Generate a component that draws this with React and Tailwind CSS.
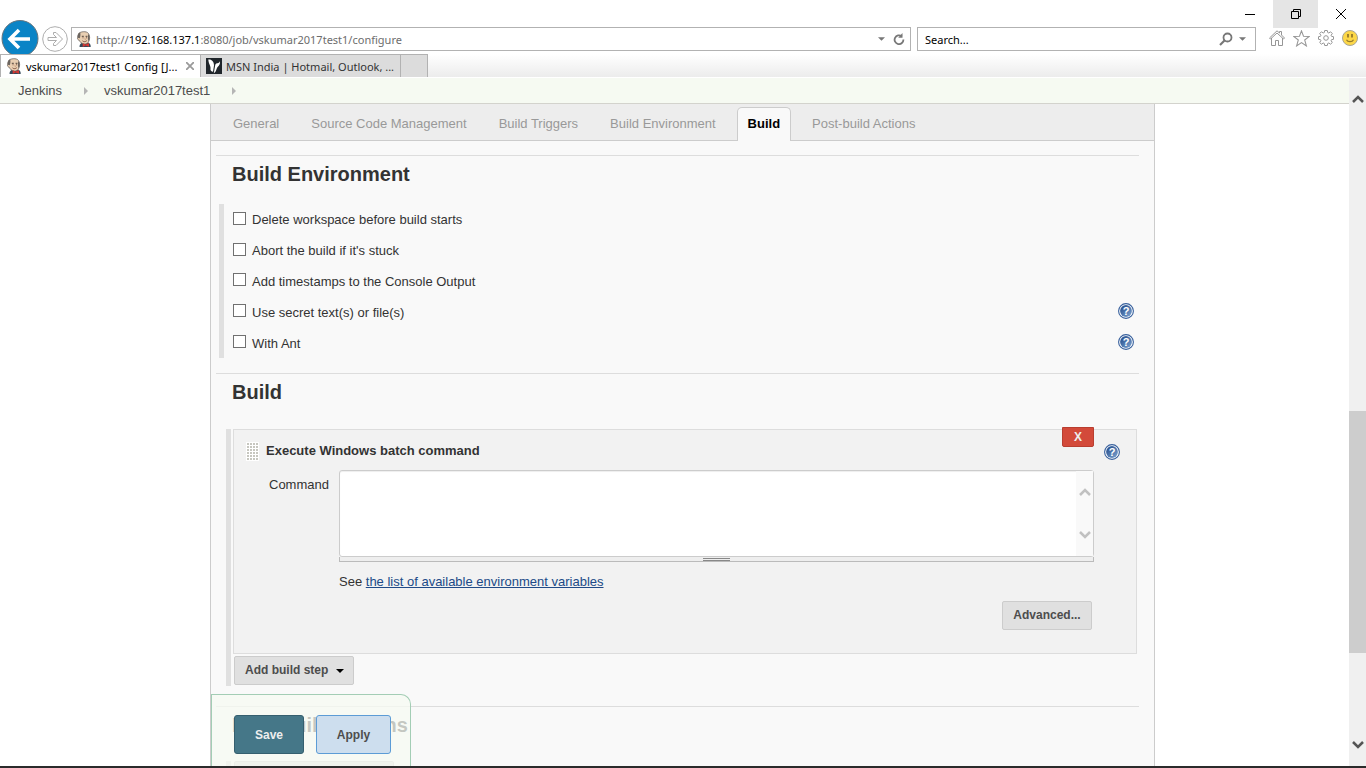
const TABS = [
  "General",
  "Source Code Management",
  "Build Triggers",
  "Build Environment",
  "Build",
  "Post-build Actions",
];

const ENV_OPTIONS = [
  { id: "delete-ws", label: "Delete workspace before build starts" },
  { id: "abort-stuck", label: "Abort the build if it's stuck" },
  { id: "timestamps", label: "Add timestamps to the Console Output" },
  { id: "secrets", label: "Use secret text(s) or file(s)", help: true },
  { id: "with-ant", label: "With Ant", help: true },
];

function JenkinsIcon() {
  return (
    <svg viewBox="0 0 16 16" className="h-4 w-4 shrink-0" aria-hidden="true">
      <path d="M3.500 16c0-2.500 1-4 3.500-4.500h4.500c2.500.5 3.200 2 3.200 4.500z" fill="#34495a" />
      <path d="M2.600 2.800C4 .4 10.500-.3 12.400 2.400c1.600 2.200 1.500 5.200.6 7.500-.7 2-2.300 3.200-4.300 3.200C6 13 4.200 11.400 3.300 9.300c-1.300-.3-2.100-1.400-1.700-2.500.2-1.500.3-3 1-4z" fill="#e9cfb2" stroke="#5c5550" strokeWidth=".7" />
      <path d="M1.800 6.800C1.400 4.500 2 2 4.200 1.300c.4 1.800.3 4-.4 6zM12.300 3c1.600 1.700 1.500 4.800.5 7-1-.5-1.200-4.500-.5-7z" fill="#6b645e" />
      <path d="M5.800 5.300h2M9.600 5.300h1.800" stroke="#40352f" strokeWidth=".9" />
      <path d="M6.500 6.800h1M10 6.800h1M6.500 9.800c1.200 1.200 3 1.100 4.300-.1" stroke="#7a4c39" strokeWidth=".9" fill="none" />
      <path d="M9 6.700v1.900h.9" stroke="#c69a76" strokeWidth=".7" fill="none" />
      <path d="M6.700 12.300l2.800 1.300 3.500-1.500v3.700L9.500 14.600 6.700 16z" fill="#d33833" />
    </svg>
  );
}

function MsnIcon() {
  return (
    <svg viewBox="0 0 16 16" className="h-4 w-4 shrink-0" aria-hidden="true">
      <path d="M0 0h16v16H0z" fill="#20262b" />
      <path d="M2.300 1.500C5.500.9 8 3.500 8 7.500L7 13.800c-1.500-.2-3-1.500-2.500-3.600C4.900 8.200 2.600 6 2.300 1.500z" fill="#fff" />
      <path d="M13.900 3.200c.5 3-1 4.400-2.300 5.800-1.500 1.700-.8 4.500-3.800 6.200l1.300-7.500c.2-1.700 1-2.700 2.300-2.500 1 .1 1.900-.8 2.500-2z" fill="#fff" />
    </svg>
  );
}

function HelpButton() {
  return (
    <button type="button" aria-label="Help" className="block h-4 w-4 shrink-0">
      <svg viewBox="0 0 16 16" className="h-4 w-4">
        <defs>
          <linearGradient id="help-fill" x1="0" x2="1" y1="0" y2="1">
            <stop offset="0" stopColor="#1d4585" />
            <stop offset="1" stopColor="#7fa6d3" />
          </linearGradient>
        </defs>
        <circle cx="8" cy="8" r="7.400" fill="#fff" stroke="#365f9c" strokeWidth="1.100" />
        <circle cx="8" cy="8" r="5.900" fill="url(#help-fill)" />
        <text x="8" y="12" textAnchor="middle" fontSize="11" fontWeight="700" fill="#fff" fontFamily="Liberation Sans, sans-serif">?</text>
      </svg>
    </button>
  );
}

function Caret({ className }) {
  return (
    <svg viewBox="0 0 8 4" className={className} aria-hidden="true">
      <path d="M0 0h8L4 4z" fill="currentColor" />
    </svg>
  );
}

function Chevron({ down, className }) {
  return (
    <svg viewBox="0 0 12 10" className={className} fill="none" stroke="currentColor" strokeWidth="2.500" aria-hidden="true">
      <path d={down ? "M1 2l5 5 5-5" : "M1 8l5-5 5 5"} />
    </svg>
  );
}

function WindowControls() {
  return (
    <div className="flex h-[27px] justify-end">
      <button type="button" aria-label="Minimize" className="flex h-7 w-[46px] items-center justify-center">
        <svg viewBox="0 0 10 10" className="h-[10px] w-[10px]" stroke="#000">
          <path d="M0 5.500h10" />
        </svg>
      </button>
      <button type="button" aria-label="Restore" className="flex h-7 w-[45px] items-center justify-center bg-[#e5e5e5]">
        <svg viewBox="0 0 10 10" className="h-[10px] w-[10px]" fill="none" stroke="#000">
          <path d="M.5 2.500h7v7h-7zM2.500 2.500v-2h7v7h-2" />
        </svg>
      </button>
      <button type="button" aria-label="Close" className="mr-[2px] flex h-7 w-[46px] items-center justify-center">
        <svg viewBox="0 0 10 10" className="h-[10px] w-[10px]" stroke="#000">
          <path d="M0 0l10 10M10 0L0 10" />
        </svg>
      </button>
    </div>
  );
}

function AddressBar() {
  return (
    <div className="flex h-[27px] items-start pr-2">
      <button type="button" aria-label="Back" className="-mt-[7px] ml-[1px] h-[34px] w-[38px] shrink-0 overflow-hidden">
        <svg viewBox="0 0 38 34" className="h-[34px] w-[38px]">
          <circle cx="19" cy="18.500" r="18" fill="#0a84c6" stroke="#68757d" />
          <path d="M10 19h19M18 10l-9 9 9 9" fill="none" stroke="#fff" strokeWidth="3.600" />
        </svg>
      </button>
      <button type="button" aria-label="Forward" className="-mt-[1px] ml-[3px] h-[26px] w-[26px] shrink-0">
        <svg viewBox="0 0 26 26" className="h-[26px] w-[26px]" fill="none" stroke="#adadad">
          <circle cx="13" cy="13" r="12.300" />
          <path d="M6 11.500h8.500L11.500 8.500V6.500h2.500l6.500 6.500-6.500 6.500h-2.500v-2l3-3H6z" />
        </svg>
      </button>
      <div className="ml-[3px] flex h-6 flex-1 items-center border border-[#b2b2b2] bg-white pl-1">
        <JenkinsIcon />
        <p className="ml-1 flex-1 pt-px leading-4 text-[#6d6d6d]">
          http://<span className="text-black">192.168.137.1</span>:8080/job/vskumar2017test1/configure
        </p>
        <Caret className="h-1 w-[7px] text-[#777]" />
        <button type="button" aria-label="Refresh" className="ml-2 mr-[5px]">
          <svg viewBox="0 0 12 12" className="h-3 w-3" fill="none" stroke="#777" strokeWidth="1.800">
            <path d="M8.800 3.300A4.400 4.400 0 1 0 10.400 6.500" />
            <path d="M9.500 0v4.800H5.200z" fill="#777" stroke="none" />
          </svg>
        </button>
      </div>
      <div className="ml-[6px] flex h-6 w-[339px] items-center border border-[#b2b2b2] bg-white px-[7px]">
        <input
          type="text"
          aria-label="Search"
          placeholder="Search..."
          className="min-w-0 flex-1 pt-px leading-4 outline-none placeholder:text-black"
        />
        <button type="button" aria-label="Run search" className="mr-[6px]">
          <svg viewBox="0 0 14 14" className="h-[14px] w-[14px]" fill="none" stroke="#777">
            <circle cx="8.500" cy="5.500" r="4" strokeWidth="1.800" />
            <path d="M5.500 8.500L1 13" strokeWidth="2.200" />
          </svg>
        </button>
        <Caret className="mr-[2px] h-1 w-[7px] text-[#777]" />
      </div>
      <div className="ml-[13px] mt-[3px] flex gap-2">
        <button type="button" aria-label="Home" className="h-4 w-4">
          <svg viewBox="0 0 16 16" className="h-4 w-4" fill="#fff" stroke="#969696">
            <path d="M2.500 8v7.500h4v-5h3v5h4V8M.5 8L8 .8 10.500 3V1.500h2V5l3 3-1 1L8 3 1.500 9z" />
          </svg>
        </button>
        <button type="button" aria-label="Favorites" className="h-[17px] w-[17px]">
          <svg viewBox="0 0 16 16" className="h-[17px] w-[17px]" fill="#fff" stroke="#969696">
            <path d="M8 .8l1.900 5.100 5.400.2-4.300 3.300 1.600 5.600L8 11.900 3.400 15 5 9.400.7 6.100l5.400-.2z" />
          </svg>
        </button>
        <button type="button" aria-label="Tools" className="h-4 w-4">
          <svg viewBox="0 0 16 16" className="h-4 w-4" fill="#fff" stroke="#969696">
            <path d="M6.700.5h2.600l.4 2 1.100.5 1.800-1.200 1.700 1.700L13.100 5.300l.4 1 2 .4v2.600l-2 .4-.4 1 1.200 1.800-1.700 1.700-1.800-1.200-1.100.5-.4 2H6.700l-.4-2-1.100-.5-1.800 1.200-1.700-1.700 1.200-1.800-.4-1-2-.4V6.700l2-.4.4-1-1.200-1.800 1.700-1.700L5.200 3l1.100-.5z" />
            <circle cx="8" cy="8" r="2.300" />
          </svg>
        </button>
        <button type="button" aria-label="Feedback" className="h-4 w-4">
          <svg viewBox="0 0 16 16" className="h-4 w-4">
            <circle cx="8" cy="8" r="7.500" fill="#fcd748" stroke="#a8a596" />
            <path d="M6 4v3.500M10 4v3.500" stroke="#94792b" strokeWidth="1.800" />
            <path d="M4.500 9.800c1.200 2.500 5.800 2.500 7 0" fill="none" stroke="#94792b" strokeWidth="1.200" />
          </svg>
        </button>
      </div>
    </div>
  );
}

function BrowserTabs() {
  return (
    <div className="flex h-6 border-b border-white bg-gradient-to-b from-white to-[#ececec] leading-4">
      <div className="flex w-[201px] items-center border-l border-r border-t border-[#b2b2b2] bg-white pl-[5px] text-black">
        <JenkinsIcon />
        <span className="ml-1 flex-1 whitespace-nowrap pt-px">vskumar2017test1 Config [J...</span>
        <button type="button" aria-label="Close tab" className="mr-[6px]">
          <svg viewBox="0 0 8 8" className="h-2 w-2" stroke="#9a9a9a" strokeWidth="1.800">
            <path d="M0 0l8 8M8 0L0 8" />
          </svg>
        </button>
      </div>
      <div className="flex w-[200px] items-center border-r border-t border-[#b2b2b2] bg-[#dcdcdc] pl-[5px] text-[#333]">
        <MsnIcon />
        <span className="ml-1 whitespace-nowrap pt-px">MSN India | Hotmail, Outlook, ...</span>
      </div>
      <button type="button" aria-label="New tab" className="w-[27px] border-r border-t border-[#b2b2b2] bg-[#dcdcdc]" />
    </div>
  );
}

function Breadcrumbs() {
  return (
    <nav className="flex h-[26px] shrink-0 items-center border-b border-[#d3d3cd] bg-[#f6faf2] pl-[18px] leading-4 text-[#4d4d4d]">
      <a href="#jenkins">Jenkins</a>
      <svg viewBox="0 0 4 8" className="ml-[22px] mr-4 h-2 w-1" fill="#b5b5b5">
        <path d="M0 0l4 4-4 4z" />
      </svg>
      <a href="#job">vskumar2017test1</a>
      <svg viewBox="0 0 4 8" className="ml-[22px] h-2 w-1" fill="#b5b5b5">
        <path d="M0 0l4 4-4 4z" />
      </svg>
    </nav>
  );
}

function ConfigTabs() {
  return (
    <nav className="flex h-[37px] items-end gap-[10px] border-b border-[#ccc] bg-[#ededed] pl-[11px]">
      {TABS.map((tab) => (
        <a
          key={tab}
          href="#tab"
          className={
            tab === "Build"
              ? "-mb-px h-[34px] whitespace-nowrap rounded-t-[5px] border border-b-0 border-[#ccc] bg-[#f9f9f9] px-[10px] pt-2 font-bold leading-4 text-black"
              : "-mb-px h-[34px] whitespace-nowrap border border-b-0 border-transparent px-[10px] pt-2 leading-4 text-[#999]"
          }
        >
          {tab}
        </a>
      ))}
    </nav>
  );
}

function SectionTitle({ children }) {
  return (
    <h2 className="border-t border-[#ddd] pl-4 pt-[6px] text-[20px] font-bold leading-6 text-[#333]">
      {children}
    </h2>
  );
}

function BatchStep() {
  return (
    <div className="relative mr-[2px] border border-[#ddd] bg-[#f2f2f2] pb-[23px]">
      <button
        type="button"
        aria-label="Delete build step"
        className="absolute -top-[3px] right-[42px] h-5 w-8 rounded-b-[2px] border border-[#b93e30] bg-[#d34a3a] text-[12px] font-bold leading-4 text-[#eee]"
      >
        X
      </button>
      <div className="flex h-10 items-center pl-3 pr-4">
        <svg viewBox="0 0 13 19" className="mt-[2px] h-[19px] w-[13px]" aria-hidden="true">
          <defs>
            <pattern id="grip" width="3" height="3" patternUnits="userSpaceOnUse">
              <path d="M0 0h3v3H0z" fill="#fff" />
              <path d="M1 1h2v2H1z" fill="#c6c6bf" />
            </pattern>
          </defs>
          <path d="M0 0h13v19H0z" fill="url(#grip)" />
        </svg>
        <b className="ml-[7px] flex-1 pt-px">Execute Windows batch command</b>
        <div className="mt-1">
          <HelpButton />
        </div>
      </div>
      <div className="flex pl-[35px] pr-[42px]">
        <label htmlFor="command" className="w-[70px] pt-[7px] leading-4">
          Command
        </label>
        <div className="min-w-0 flex-1">
          <div className="flex h-[87px] rounded-[3px] border border-[#ccc] bg-white shadow-[inset_0_1px_1px_#eee]">
            <textarea id="command" className="h-full min-w-0 flex-1 resize-none overflow-hidden px-2 outline-none" />
            <div className="flex w-[17px] flex-col items-center justify-between bg-[#f9f9f9] py-4 text-[#c1c1c1]">
              <Chevron className="h-[10px] w-3" />
              <Chevron down className="h-[10px] w-3" />
            </div>
          </div>
          <div className="flex h-[5px] items-center justify-center border border-t-0 border-[#bbb] bg-[#eee]">
            <div className="h-[3px] w-[27px] border-y border-[#888]" />
          </div>
          <p className="mt-3 leading-4">
            See{" "}
            <a href="#env-vars" className="text-[#204a87] underline">
              the list of available environment variables
            </a>
          </p>
        </div>
      </div>
      <div className="mt-[11px] flex justify-end pr-11">
        <button
          type="button"
          className="h-[29px] w-[90px] rounded-[2px] border border-[#ccc] bg-[#e0e0e0] pb-[2px] text-[12px] font-bold leading-4 text-[#4d4d4d]"
        >
          Advanced...
        </button>
      </div>
    </div>
  );
}

function BottomBar() {
  return (
    <div className="absolute bottom-0 left-[211px] flex h-[72px] w-[200px] gap-3 rounded-tr-[10px] border border-b-0 border-[#a3cdb5] bg-[#f6faf2]/75 pl-[22px] pt-5 text-[12px] font-bold leading-4">
      <button type="submit" className="h-[39px] w-[70px] rounded-[3px] border border-[#355f6f] bg-[#457788] text-[#eee]">
        Save
      </button>
      <button type="button" className="h-[39px] w-[75px] rounded-[3px] border border-[#5c9cd6] bg-[#cddeee] text-[#4d4d4d]">
        Apply
      </button>
    </div>
  );
}

function PageScrollbar() {
  return (
    <div className="flex w-[17px] shrink-0 flex-col items-center bg-[#f0f0f0] pb-4 pt-4 text-[#555]">
      <Chevron className="h-[10px] w-3" />
      <div className="w-full flex-[307]" />
      <div className="w-full flex-[242] bg-[#cdcdcd]" />
      <div className="w-full flex-[87]" />
      <Chevron down className="h-[10px] w-3" />
    </div>
  );
}

export default function App() {
  return (
    <div className="flex h-screen flex-col overflow-hidden border-b-2 border-[#2b2b2b] bg-white">
      <header className="shrink-0 font-['Noto_Sans','Open_Sans',sans-serif] text-[11px]">
        <WindowControls />
        <AddressBar />
        <BrowserTabs />
      </header>

      <div className="flex min-h-0 flex-1 font-['Liberation_Sans',Arial,sans-serif] text-[13px] text-[#333]">
        <div className="relative flex min-w-0 flex-1 flex-col overflow-hidden">
          <Breadcrumbs />
          <form className="ml-[210px] mr-[194px] shrink-0 border-x border-[#ccc] bg-[#f9f9f9]">
            <ConfigTabs />
            <div className="pl-[5px] pr-[15px] pt-[14px]">
              <SectionTitle>Build Environment</SectionTitle>
              <ul className="ml-[3px] mt-[18px] flex h-[154px] flex-col border-l-[5px] border-[#e0e0e0]">
                {ENV_OPTIONS.map((opt) => (
                  <li key={opt.id} className="flex flex-1 items-center pl-[9px] pr-[5px]">
                    <input
                      id={opt.id}
                      type="checkbox"
                      className="mb-[2px] h-[13px] w-[13px] appearance-none border border-[#707070] bg-white checked:bg-[#707070]"
                    />
                    <label htmlFor={opt.id} className="ml-[6px] flex-1 pt-[2px] leading-4">
                      {opt.label}
                    </label>
                    {opt.help && (
                      <div className="mb-[2px]">
                        <HelpButton />
                      </div>
                    )}
                  </li>
                ))}
              </ul>

              <div className="mt-[15px]">
                <SectionTitle>Build</SectionTitle>
              </div>
              <div className="ml-[10px] mt-[25px] border-l-[5px] border-[#e0e0e0] pb-px pl-[2px]">
                <BatchStep />
                <button
                  type="button"
                  className="ml-px mt-[2px] flex h-[29px] w-[120px] items-center rounded-[2px] border border-[#ccc] bg-[#e0e0e0] pb-[2px] pl-[10px] text-[12px] font-bold leading-4 text-[#4d4d4d]"
                >
                  Add build step
                  <Caret className="ml-2 mt-[2px] h-1 w-2 text-black" />
                </button>
              </div>

              <div className="mt-5">
                <SectionTitle>Post-build Actions</SectionTitle>
              </div>
              <div className="ml-[10px] mt-6 border-l-[5px] border-[#e0e0e0] pl-[3px]">
                <button
                  type="button"
                  aria-label="Add post-build action"
                  className="block h-[29px] w-[160px] rounded-[2px] border border-[#ccc] bg-[#e0e0e0]"
                />
              </div>
            </div>
          </form>
          <BottomBar />
        </div>
        <PageScrollbar />
      </div>
    </div>
  );
}
